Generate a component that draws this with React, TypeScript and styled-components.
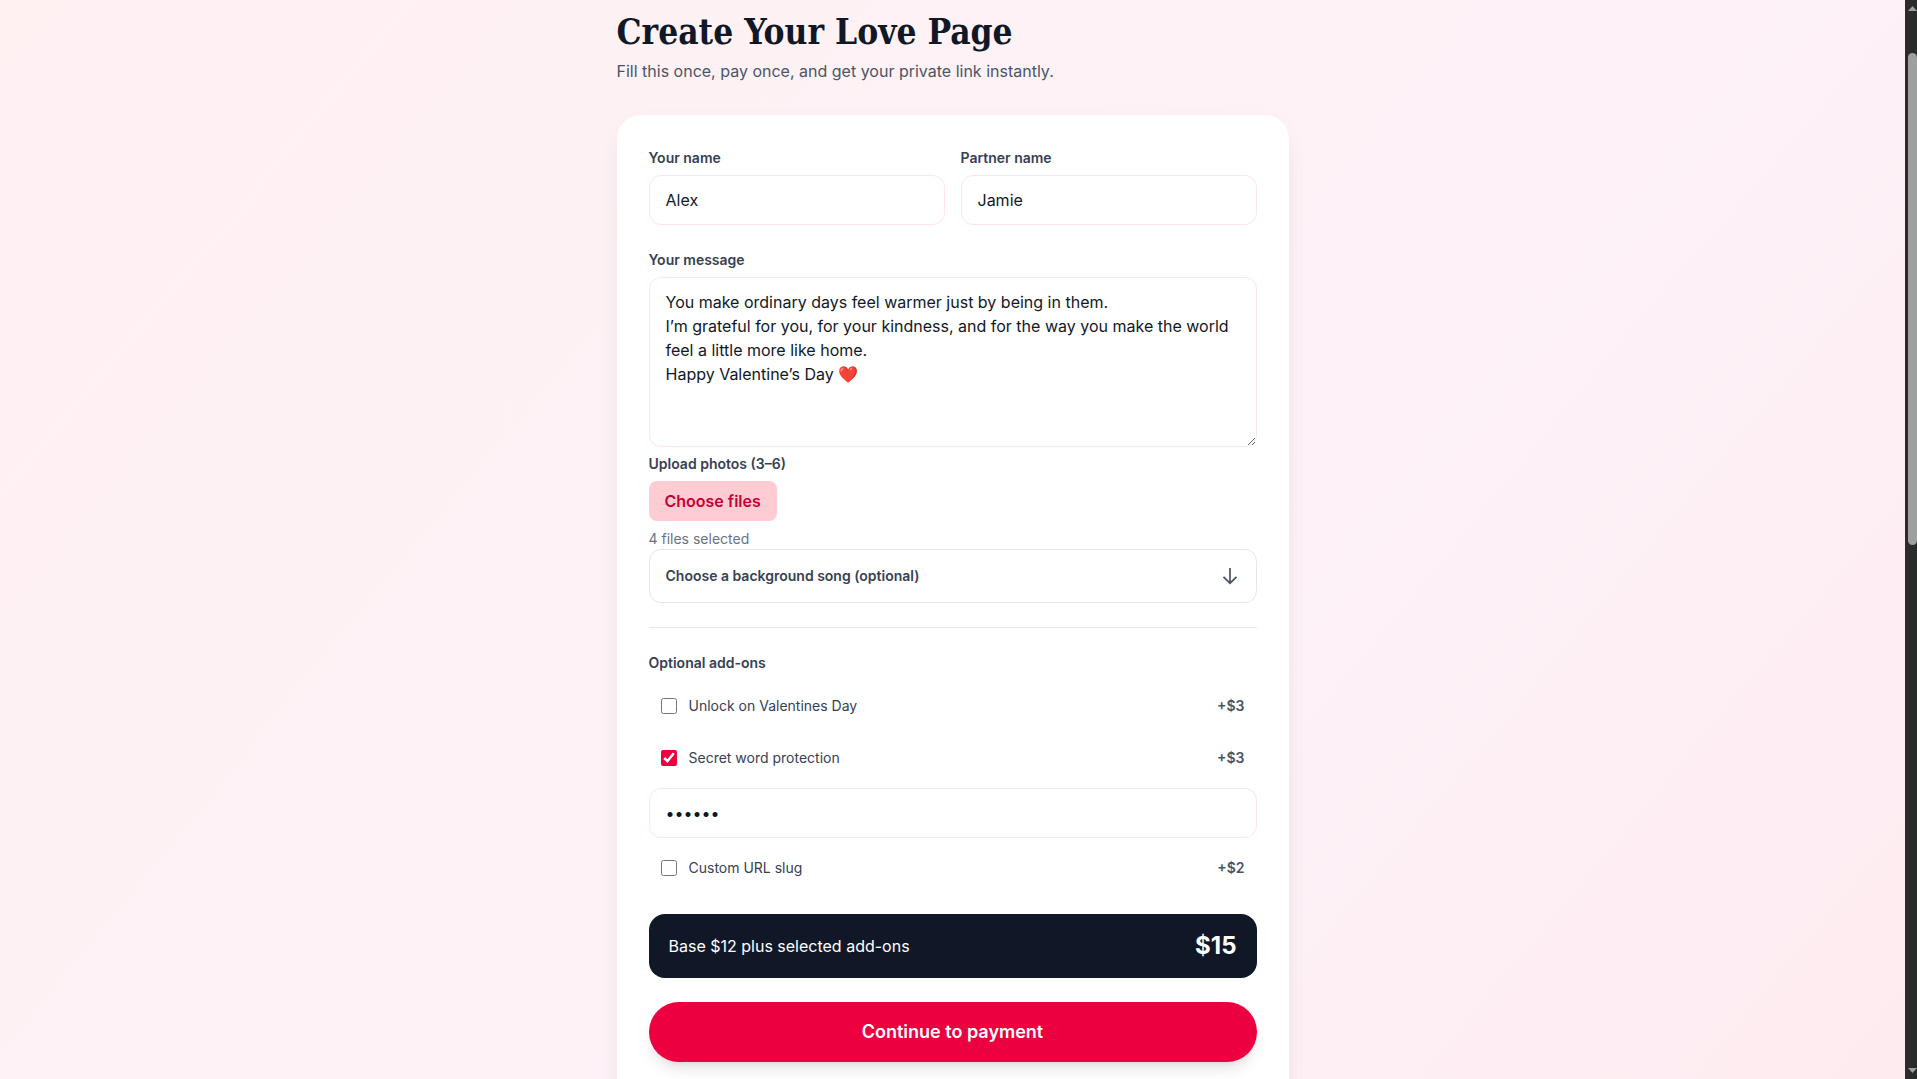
import React, { useRef, useState } from "react";
import styled, { createGlobalStyle } from "styled-components";

const color = {
  ink: "#101828",
  label: "#364153",
  body: "#4a5565",
  muted: "#6a7282",
  line: "#e5e7eb",
  blush: "#ffe4e6",
  petal: "#ffccd3",
  rose: "#ec003f",
  roseDark: "#c70036",
};

const GlobalStyle = createGlobalStyle`
  *, *::before, *::after { box-sizing: border-box; }
  body {
    margin: 0;
    overflow: hidden;
    font-family: Inter, "Noto Sans", sans-serif;
    font-size: 16px;
    line-height: 24px;
    color: ${color.ink};
  }
  h1, p, fieldset { margin: 0; padding: 0; border: 0; min-width: 0; }
  button, input, textarea { font: inherit; color: inherit; }
`;

const Window = styled.div`
  display: flex;
  height: 100vh;
  overflow: hidden;
`;

const Page = styled.main`
  flex: 1;
  min-width: 0;
  padding: 11px 16px 0;
  background: linear-gradient(to bottom right, #fff1f2, #fdf2f8, #ffe4e6) 0 -80px / 100% 2290px no-repeat;
`;

const Column = styled.div`
  max-width: 672px;
  margin: 0 auto;
`;

const Header = styled.header`
  display: grid;
  gap: 6px;
  margin-bottom: 32px;
`;

const Title = styled.h1`
  font-family: "DejaVu Serif Condensed", "DejaVu Serif", serif;
  font-size: 35px;
  line-height: 42px;
  font-weight: 700;
`;

const Subtitle = styled.p`
  color: ${color.body};
`;

const Card = styled.form`
  display: flex;
  flex-direction: column;
  padding: 32px 32px 64px;
  border-radius: 24px;
  background: #fff;
  box-shadow: 0 20px 25px -5px rgba(0, 0, 0, 0.06), 0 8px 24px rgba(16, 24, 40, 0.03);
`;

const NameRow = styled.div`
  display: grid;
  grid-template-columns: 1fr 1fr;
  gap: 16px;
  margin-bottom: 24px;
`;

const Field = styled.div`
  display: grid;
  margin-bottom: ${(p: { $after?: number }) => p.$after ?? 0}px;
`;

const Label = styled.label`
  margin-bottom: 6px;
  font-size: 14px;
  line-height: 22px;
  font-weight: 600;
  color: ${color.label};
`;

const TextInput = styled.input`
  width: 100%;
  height: 50px;
  padding: 12px 16px;
  border: 1px solid ${color.blush};
  border-radius: 12px;
  background: #fff;
  outline: none;
`;

const MessageBox = styled.textarea`
  display: block;
  width: 100%;
  padding: 12px 16px;
  border: 1px solid ${color.blush};
  border-radius: 12px;
  background: #fff;
  outline: none;
  resize: vertical;
`;

const UploadButton = styled.button`
  justify-self: start;
  padding: 8px 16px;
  border: 0;
  border-radius: 8px;
  background: ${color.petal};
  color: ${color.roseDark};
  font-weight: 600;
  cursor: pointer;
`;

const HiddenFile = styled.input`
  display: none;
`;

const FileCount = styled.p`
  && {
    margin-top: 8px;
  }
  font-size: 14px;
  line-height: 20px;
  color: ${color.muted};
`;

const SongToggle = styled.button`
  display: flex;
  align-items: center;
  justify-content: space-between;
  height: 54px;
  padding: 0 16px;
  border: 1px solid ${color.line};
  border-radius: 12px;
  background: #fff;
  color: ${color.label};
  font-size: 14px;
  font-weight: 600;
  cursor: pointer;

  svg {
    color: ${color.body};
  }
`;

const Divider = styled.hr`
  width: 100%;
  margin: 24px 0;
  border: 0;
  border-top: 1px solid ${color.line};
`;

const AddOns = styled.fieldset`
  display: grid;
  gap: 8px;
  && {
    margin-bottom: 24px;
  }
`;

const Legend = styled.legend`
  padding: 0;
  margin-bottom: 10px;
  font-size: 14px;
  line-height: 22px;
  font-weight: 600;
  color: ${color.label};
`;

const AddOnRow = styled.label`
  display: flex;
  align-items: center;
  gap: 12px;
  padding: 12px;
  font-size: 14px;
  line-height: 20px;
  color: ${color.label};
  cursor: pointer;
`;

const Checkbox = styled.input`
  width: 16px;
  height: 16px;
  margin: 0;
  accent-color: ${color.rose};
`;

const AddOnPrice = styled.span`
  margin-left: auto;
  font-weight: 600;
  color: ${color.body};
`;

const Summary = styled.div`
  display: flex;
  align-items: center;
  justify-content: space-between;
  padding: 16px 20px;
  margin-bottom: 24px;
  border-radius: 16px;
  background: ${color.ink};
  color: #fff;
`;

const Total = styled.strong`
  font-size: 24px;
  line-height: 32px;
  font-weight: 700;
`;

const SubmitButton = styled.button`
  padding: 16px 24px;
  border: 0;
  border-radius: 999px;
  background: ${color.rose};
  color: #fff;
  font-size: 18px;
  line-height: 28px;
  font-weight: 600;
  box-shadow: 0 10px 15px -3px rgba(0, 0, 0, 0.1), 0 4px 6px -4px rgba(0, 0, 0, 0.1);
  cursor: pointer;
`;

const ScrollRail = styled.div`
  display: flex;
  flex-direction: column;
  flex: none;
  width: 12px;
  padding: 6px 0 6px 3px;
  background: #2b2b2b;
`;

const ScrollArrow = styled.svg`
  display: block;
  flex: none;
  width: 9px;
  height: 5px;
  fill: #9f9f9f;
`;

const ScrollGap = styled.div`
  flex: ${(p: { $share: number }) => p.$share} 0 0;
`;

const ScrollThumb = styled.div`
  flex: 492 0 0;
  border-radius: 5px;
  background: #9f9f9f;
`;

const DEFAULT_MESSAGE = [
  "You make ordinary days feel warmer just by being in them.",
  "I’m grateful for you, for your kindness, and for the way you make the world feel a little more like home.",
  "Happy Valentine’s Day ❤️",
].join("\n");

const BASE_PRICE = 12;
const PRICES = { unlock: 3, secret: 3, slug: 2 };
type AddOnKey = keyof typeof PRICES;

function AddOn(props: { label: string; price: number; checked: boolean; onToggle: () => void }) {
  return (
    <AddOnRow>
      <Checkbox type="checkbox" checked={props.checked} onChange={props.onToggle} />
      {props.label}
      <AddOnPrice>+${props.price}</AddOnPrice>
    </AddOnRow>
  );
}

function ArrowDown() {
  return (
    <svg width="20" height="20" viewBox="0 0 20 20" fill="none" stroke="currentColor" strokeWidth="1.7" aria-hidden="true">
      <path d="M10 2v15M3.5 10.8L10 17.2l6.500-6.400" />
    </svg>
  );
}

export default function App() {
  const fileRef = useRef<HTMLInputElement>(null);
  const [fileCount, setFileCount] = useState(4);
  const [songsOpen, setSongsOpen] = useState(false);
  const [picked, setPicked] = useState<Record<AddOnKey, boolean>>({ unlock: false, secret: true, slug: false });

  const toggle = (key: AddOnKey) => () => setPicked((p) => ({ ...p, [key]: !p[key] }));
  const total = (Object.keys(PRICES) as AddOnKey[]).reduce(
    (sum, key) => sum + (picked[key] ? PRICES[key] : 0),
    BASE_PRICE
  );

  return (
    <Window>
      <GlobalStyle />
      <Page>
        <Column>
          <Header>
            <Title>Create Your Love Page</Title>
            <Subtitle>Fill this once, pay once, and get your private link instantly.</Subtitle>
          </Header>

          <Card onSubmit={(e) => e.preventDefault()}>
            <NameRow>
              <Field>
                <Label htmlFor="your-name">Your name</Label>
                <TextInput id="your-name" defaultValue="Alex" />
              </Field>
              <Field>
                <Label htmlFor="partner-name">Partner name</Label>
                <TextInput id="partner-name" defaultValue="Jamie" />
              </Field>
            </NameRow>

            <Field $after={6}>
              <Label htmlFor="message">Your message</Label>
              <MessageBox id="message" rows={6} spellCheck={false} defaultValue={DEFAULT_MESSAGE} />
            </Field>

            <Field>
              <Label htmlFor="photos">Upload photos (3–6)</Label>
              <UploadButton type="button" onClick={() => fileRef.current?.click()}>
                Choose files
              </UploadButton>
              <HiddenFile
                ref={fileRef}
                id="photos"
                type="file"
                accept="image/*"
                multiple
                onChange={(e) => setFileCount(e.target.files?.length ?? 0)}
              />
              <FileCount>{fileCount} files selected</FileCount>
            </Field>

            <SongToggle type="button" aria-expanded={songsOpen} onClick={() => setSongsOpen(!songsOpen)}>
              Choose a background song (optional)
              <ArrowDown />
            </SongToggle>

            <Divider />

            <AddOns>
              <Legend>Optional add-ons</Legend>
              <AddOn label="Unlock on Valentines Day" price={PRICES.unlock} checked={picked.unlock} onToggle={toggle("unlock")} />
              <AddOn label="Secret word protection" price={PRICES.secret} checked={picked.secret} onToggle={toggle("secret")} />
              {picked.secret && <TextInput type="password" aria-label="Secret word" defaultValue="secret" />}
              <AddOn label="Custom URL slug" price={PRICES.slug} checked={picked.slug} onToggle={toggle("slug")} />
            </AddOns>

            <Summary>
              <span>Base ${BASE_PRICE} plus selected add-ons</span>
              <Total>${total}</Total>
            </Summary>

            <SubmitButton type="submit">Continue to payment</SubmitButton>
          </Card>
        </Column>
      </Page>

      <ScrollRail aria-hidden="true">
        <ScrollArrow viewBox="0 0 9 5">
          <path d="M4.500 0L9 5H0z" />
        </ScrollArrow>
        <ScrollGap $share={42} />
        <ScrollThumb />
        <ScrollGap $share={523} />
        <ScrollArrow viewBox="0 0 9 5">
          <path d="M0 0h9L4.500 5z" />
        </ScrollArrow>
      </ScrollRail>
    </Window>
  );
}
